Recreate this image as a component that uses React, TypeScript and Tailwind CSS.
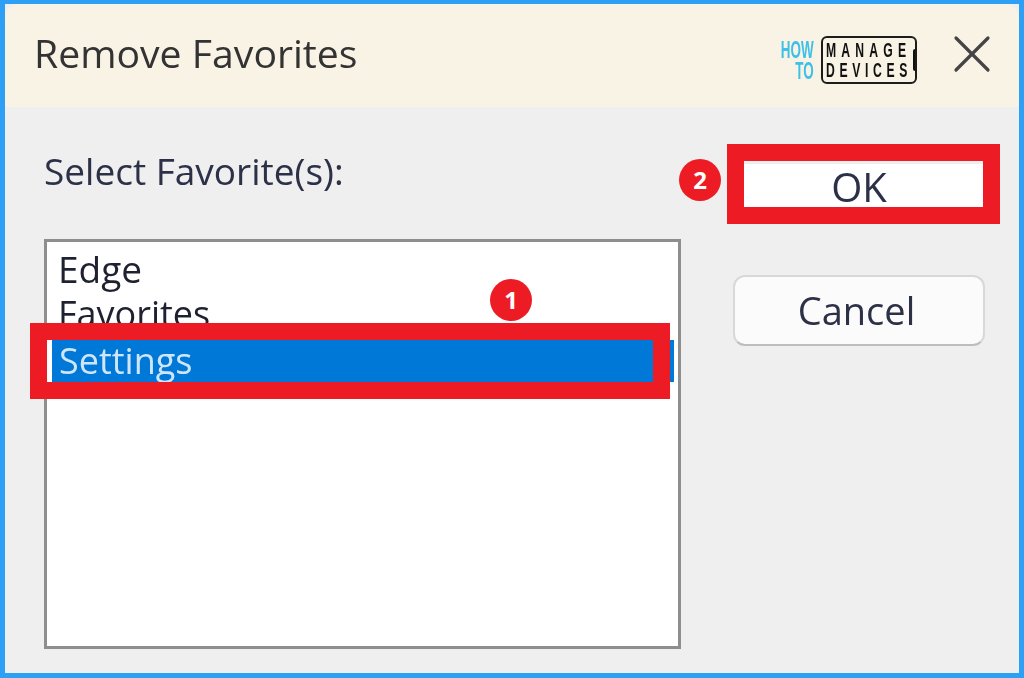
import { X } from "lucide-react";

const uiFont = "font-['Open_Sans',sans-serif]";

const Badge = ({ n, className }: { n: string; className: string }) => (
  <div
    className={`absolute flex items-center justify-center w-[42px] h-[42px] rounded-full bg-[#ed1c24] text-white text-[24px] font-bold font-['Open_Sans',sans-serif] ${className}`}
  >
    {n}
  </div>
);

const Logo = () => (
  <div className="flex items-center gap-[7px] mt-[12px]">
    <div className="flex flex-col items-end text-[#3fc0e8] font-['Liberation_Sans',sans-serif] font-bold text-[24px] leading-[21px] scale-x-[0.56] origin-right">
      <span>HOW</span>
      <span>TO</span>
    </div>
    <div className="relative flex flex-col items-center justify-center w-[96px] h-[48px] border-2 border-[#1c1c1c] rounded-[6px] text-[#111] font-['Liberation_Sans',sans-serif] font-bold text-[21px] leading-[20px] overflow-hidden">
      <span className="scale-x-[0.58] tracking-[9px] whitespace-nowrap">MANAGE</span>
      <span className="scale-x-[0.58] tracking-[8px] whitespace-nowrap">DEVICES</span>
    </div>
    <div className="w-[4px] h-[22px] ml-[-11px] bg-[#111] rounded-sm" />
  </div>
);

const App = () => {
  return (
    <div className={`relative w-[1024px] h-[678px] overflow-hidden flex flex-col bg-[#efefef] border-t-4 border-l-[5px] border-r-[5px] border-b-[5px] border-[#2d9ff5] ${uiFont}`}>
      {/* Title bar */}
      <div className="flex items-center justify-between h-[103px] shrink-0 bg-[#f8f3e5] rounded-tl-[14px] rounded-tr-[14px] pl-[29px] pr-[15px] pb-[4px]">
        <span className="text-[39.2px] text-[#333] blur-[0.5px]">Remove Favorites</span>
        <div className="flex items-center">
          <Logo />
          <X size={64} strokeWidth={1.2} className="text-[#444] blur-[0.4px] ml-[23px]" />
        </div>
      </div>

      {/* Body */}
      <div className="flex flex-1 pl-[39px] pt-[40px]">
        <div className="flex flex-col w-[637px]">
          <span className="text-[37px] leading-[48px] text-[#2c3148] blur-[0.5px]">Select Favorite(s):</span>
          <div className="mt-[44px] h-[410px] bg-white border-[3px] border-[#8e8e8e] pt-[4px] pl-[3px] pr-[4px] overflow-hidden">
            <div className="pl-[8px] text-[37px] leading-[45px] text-[#1e2230] blur-[0.4px]">Edge</div>
            <div className="pl-[8px] text-[36px] leading-[45px] h-[49px] text-[#1e2230] blur-[0.4px]">Favorites</div>
            <div className="h-[42px] pl-[7px] bg-[#0078d7] border-l-2 border-white text-[36px] leading-[42px] text-[#cfe6fa] blur-[0.3px]">
              Settings
            </div>
          </div>
        </div>

        <div className="flex flex-col ml-[52px] w-[252px] pt-[17px]">
          <button className="h-[46px] ml-[11px] mr-[2px] pr-[9px] bg-white text-[40px] leading-[46px] text-[#2c3148] blur-[0.4px]">OK</button>
          <button className="mt-[65px] h-[71px] pr-[5px] bg-[#fbfbfb] border-2 border-[#d8d8d8] border-b-[#bdbdbd] rounded-[12px] text-[38px] text-[#2c3148]">
            <span className="blur-[0.4px]">Cancel</span>
          </button>
        </div>
      </div>

      {/* Annotations */}
      <div className="absolute left-[25px] top-[319px] w-[640px] h-[76px] border-[17px] border-[#ed1c24]" />
      <div className="absolute left-[722px] top-[140px] w-[273px] h-[80px] border-[17px] border-[#ed1c24]" />
      <Badge n="1" className="left-[485px] top-[275px]" />
      <Badge n="2" className="left-[674px] top-[155px]" />
    </div>
  );
};

export default App;
